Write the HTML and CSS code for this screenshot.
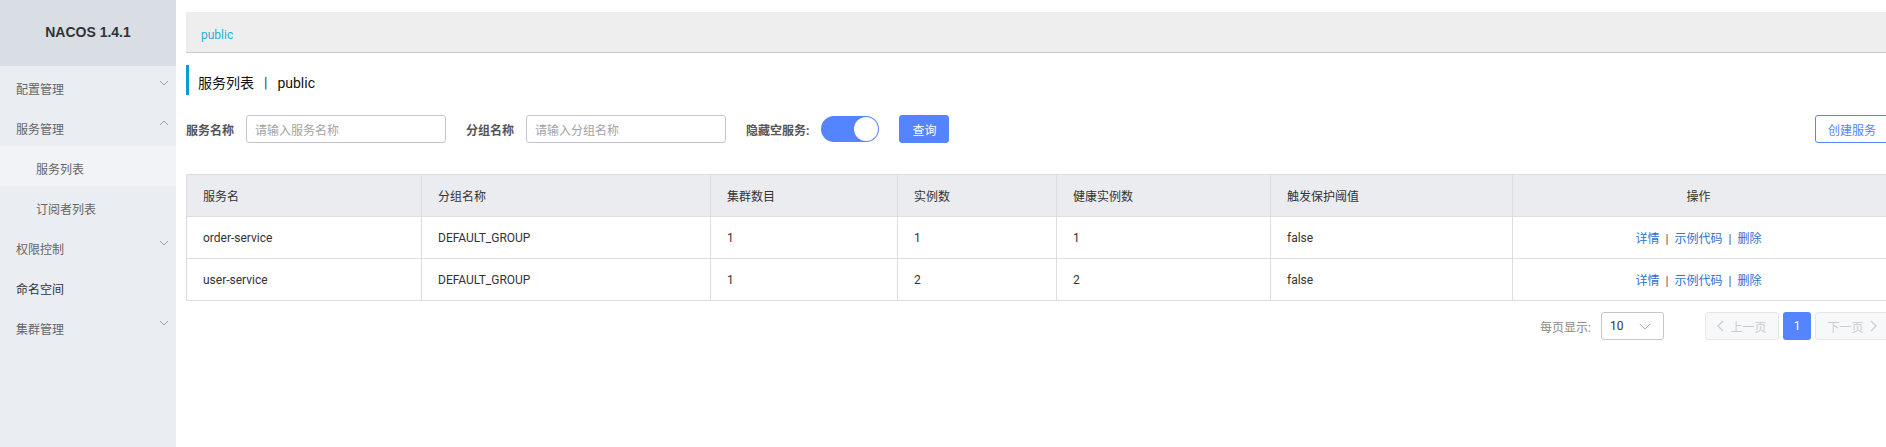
FILE: index.html
```html
<!DOCTYPE html>
<html lang="zh-CN">
<head>
<meta charset="utf-8">
<title>Nacos</title>
<link rel="stylesheet" href="styles.css">
</head>
<body>
<div class="app">
  <aside class="sidebar">
    <div class="logo">NACOS 1.4.1</div>
    <ul class="menu">
      <li class="menu-item"><span>配置管理</span><svg class="chev" viewBox="0 0 10 6"><polyline points="1,1 5,5 9,1"/></svg></li>
      <li class="menu-item"><span>服务管理</span><svg class="chev" viewBox="0 0 10 6"><polyline points="1,5 5,1 9,5"/></svg></li>
      <li class="menu-item sub active"><span>服务列表</span></li>
      <li class="menu-item sub"><span>订阅者列表</span></li>
      <li class="menu-item"><span>权限控制</span><svg class="chev" viewBox="0 0 10 6"><polyline points="1,1 5,5 9,1"/></svg></li>
      <li class="menu-item dark"><span>命名空间</span></li>
      <li class="menu-item"><span>集群管理</span><svg class="chev" viewBox="0 0 10 6"><polyline points="1,1 5,5 9,1"/></svg></li>
    </ul>
  </aside>
  <main class="main">
    <div class="breadcrumb"><span class="ns">public</span></div>
    <div class="page-title"><span class="t-text">服务列表<span class="sep">|</span>public</span></div>
    <div class="filter">
      <label class="f-label">服务名称</label>
      <div class="input"><span class="ph">请输入服务名称</span></div>
      <label class="f-label">分组名称</label>
      <div class="input"><span class="ph">请输入分组名称</span></div>
      <label class="f-label">隐藏空服务:</label>
      <div class="switch"><span class="knob"></span></div>
      <button class="btn primary">查询</button>
      <button class="btn outline create">创建服务</button>
    </div>
    <table class="grid">
      <colgroup>
        <col class="c1"><col class="c2"><col class="c3"><col class="c4"><col class="c5"><col class="c6"><col class="c7">
      </colgroup>
      <thead>
        <tr><th>服务名</th><th>分组名称</th><th>集群数目</th><th>实例数</th><th>健康实例数</th><th>触发保护阈值</th><th class="center last">操作</th></tr>
      </thead>
      <tbody>
        <tr><td>order-service</td><td>DEFAULT_GROUP</td><td>1</td><td>1</td><td>1</td><td>false</td><td class="center ops last"><a>详情</a><span class="bar">|</span><a>示例代码</a><span class="bar">|</span><a>删除</a></td></tr>
        <tr><td>user-service</td><td>DEFAULT_GROUP</td><td>1</td><td>2</td><td>2</td><td>false</td><td class="center ops last"><a>详情</a><span class="bar">|</span><a>示例代码</a><span class="bar">|</span><a>删除</a></td></tr>
      </tbody>
    </table>
    <div class="pager">
      <span class="p-label">每页显示:</span>
      <div class="select"><span>10</span><svg class="sel-chev" viewBox="0 0 14 8"><polyline points="1,1 7,7 13,1"/></svg></div>
      <div class="pg-btn disabled"><svg class="arr" viewBox="0 0 7 12"><polyline points="6,1 1,6 6,11"/></svg>上一页</div>
      <div class="pg-num">1</div>
      <div class="pg-btn disabled">下一页<svg class="arr" viewBox="0 0 7 12"><polyline points="1,1 6,6 1,11"/></svg></div>
    </div>
  </main>
</div>
</body>
</html>
```
FILE: styles.css
```css
html, body {
  margin: 0;
  padding: 0;
  overflow: hidden;
  background: #fff;
}
body {
  font-family: Roboto, "Noto Sans CJK SC", sans-serif;
  font-size: 12px;
  color: #333;
}
.app {
  display: flex;
  height: 447px;
}
.sidebar {
  width: 176px;
  flex: none;
  background: #eaedf1;
}
.logo {
  height: 66px;
  background: #d9dee4;
  display: flex;
  align-items: center;
  justify-content: center;
  font-family: "Liberation Sans", sans-serif;
  font-weight: bold;
  font-size: 14px;
  color: #333;
  padding-bottom: 3px;
  box-sizing: border-box;
}
.menu {
  list-style: none;
  margin: 0;
  padding: 0;
}
.menu-item {
  height: 40px;
  box-sizing: border-box;
  display: flex;
  align-items: center;
  justify-content: space-between;
  padding: 4px 7px 0 16px;
  color: #666;
  font-size: 12px;
}
.menu-item.sub {
  padding-left: 36px;
}
.menu-item.active {
  background: #f2f3f7;
}
.menu-item.dark {
  color: #333;
}
.chev {
  width: 10px;
  height: 6px;
  margin-bottom: 10px;
  fill: none;
  stroke: #a0a0a0;
  stroke-width: 1;
}
.main {
  flex: none;
  width: 1710px;
  padding: 12px 0 0 10px;
}
.breadcrumb {
  height: 41px;
  box-sizing: border-box;
  background: #eee;
  border-bottom: 1px solid #ccc;
  display: flex;
  align-items: center;
  padding: 5px 0 0 15px;
}
.ns {
  color: #1cb2dd;
  font-size: 12px;
}
.page-title {
  margin-top: 12px;
  height: 30px;
  box-sizing: border-box;
  border-left: 3px solid #0c9ad8;
  padding: 3px 0 0 9px;
  display: flex;
  align-items: center;
  font-size: 14px;
  color: #111;
}
.page-title .sep {
  margin: 0 10px;
  color: #333;
}
.filter {
  margin-top: 20px;
  height: 28px;
  display: flex;
  align-items: center;
}
.f-label {
  font-weight: bold;
  color: #555;
  margin-right: 12px;
}
.input {
  width: 200px;
  height: 28px;
  box-sizing: border-box;
  border: 1px solid #c4c6cf;
  border-radius: 3px;
  display: flex;
  align-items: center;
  padding-left: 8px;
  margin-right: 20px;
}
.ph {
  color: #a3a3a3;
}
.switch {
  width: 58px;
  height: 26px;
  border-radius: 13px;
  background: #5584ff;
  position: relative;
  margin-right: 20px;
}
.knob {
  position: absolute;
  right: 1px;
  top: 1px;
  width: 24px;
  height: 24px;
  border-radius: 50%;
  background: #fff;
}
.btn {
  height: 28px;
  box-sizing: border-box;
  border-radius: 3px;
  font-family: inherit;
  font-size: 12px;
  padding: 0 15px;
  cursor: pointer;
}
.primary {
  background: #5584ff;
  border: 1px solid #5584ff;
  color: #fff;
  width: 50px;
  padding: 0;
}
.outline {
  background: #fff;
  border: 1px solid #5584ff;
  color: #5584ff;
}
.create {
  margin-left: auto;
  margin-right: 7px;
  width: 74px;
  padding: 0;
}
.grid {
  margin-top: 31px;
  width: 1710px;
  border-collapse: collapse;
  table-layout: fixed;
  border-left: 1px solid #dcdee3;
}
.c1 { width: 235px; }
.c2 { width: 289px; }
.c3 { width: 187px; }
.c4 { width: 159px; }
.c5 { width: 214px; }
.c6 { width: 242px; }
.grid th, .grid td {
  border: 1px solid #dcdee3;
  text-align: left;
  padding: 0 16px;
  font-weight: normal;
  color: #333;
}
.grid th.last, .grid td.last {
  border-right: none;
  padding-right: 28px;
}
.grid th {
  background: #ebecf0;
  height: 41px;
}
.grid td {
  height: 41px;
}
.grid .center {
  text-align: center;
}
.ops a {
  color: #2a72d4;
}
.ops .bar {
  color: #555;
  margin: 0 6px;
}
.pager {
  margin-top: 11px;
  display: flex;
  align-items: center;
  justify-content: flex-end;
  padding-right: 7px;
}
.p-label {
  color: #888;
  margin-right: 10px;
}
.select {
  width: 63px;
  height: 28px;
  box-sizing: border-box;
  border: 1px solid #c4c6cf;
  border-radius: 3px;
  display: flex;
  align-items: center;
  justify-content: space-between;
  padding: 0 12px 0 8px;
  margin-right: 41px;
  color: #333;
}
.sel-chev {
  width: 12px;
  height: 7px;
  fill: none;
  stroke: #999;
  stroke-width: 1;
}
.pg-btn {
  width: 74px;
  height: 28px;
  box-sizing: border-box;
  border: 1px solid #e6e7eb;
  background: #f7f8fa;
  border-radius: 3px;
  color: #ccc;
  display: flex;
  align-items: center;
  justify-content: center;
  gap: 6px;
}
.arr {
  width: 7px;
  height: 12px;
  fill: none;
  stroke: #ccc;
  stroke-width: 1.2;
}
.pg-num {
  width: 28px;
  height: 28px;
  margin: 0 4px;
  background: #5584ff;
  border-radius: 3px;
  color: #fff;
  display: flex;
  align-items: center;
  justify-content: center;
}
```
